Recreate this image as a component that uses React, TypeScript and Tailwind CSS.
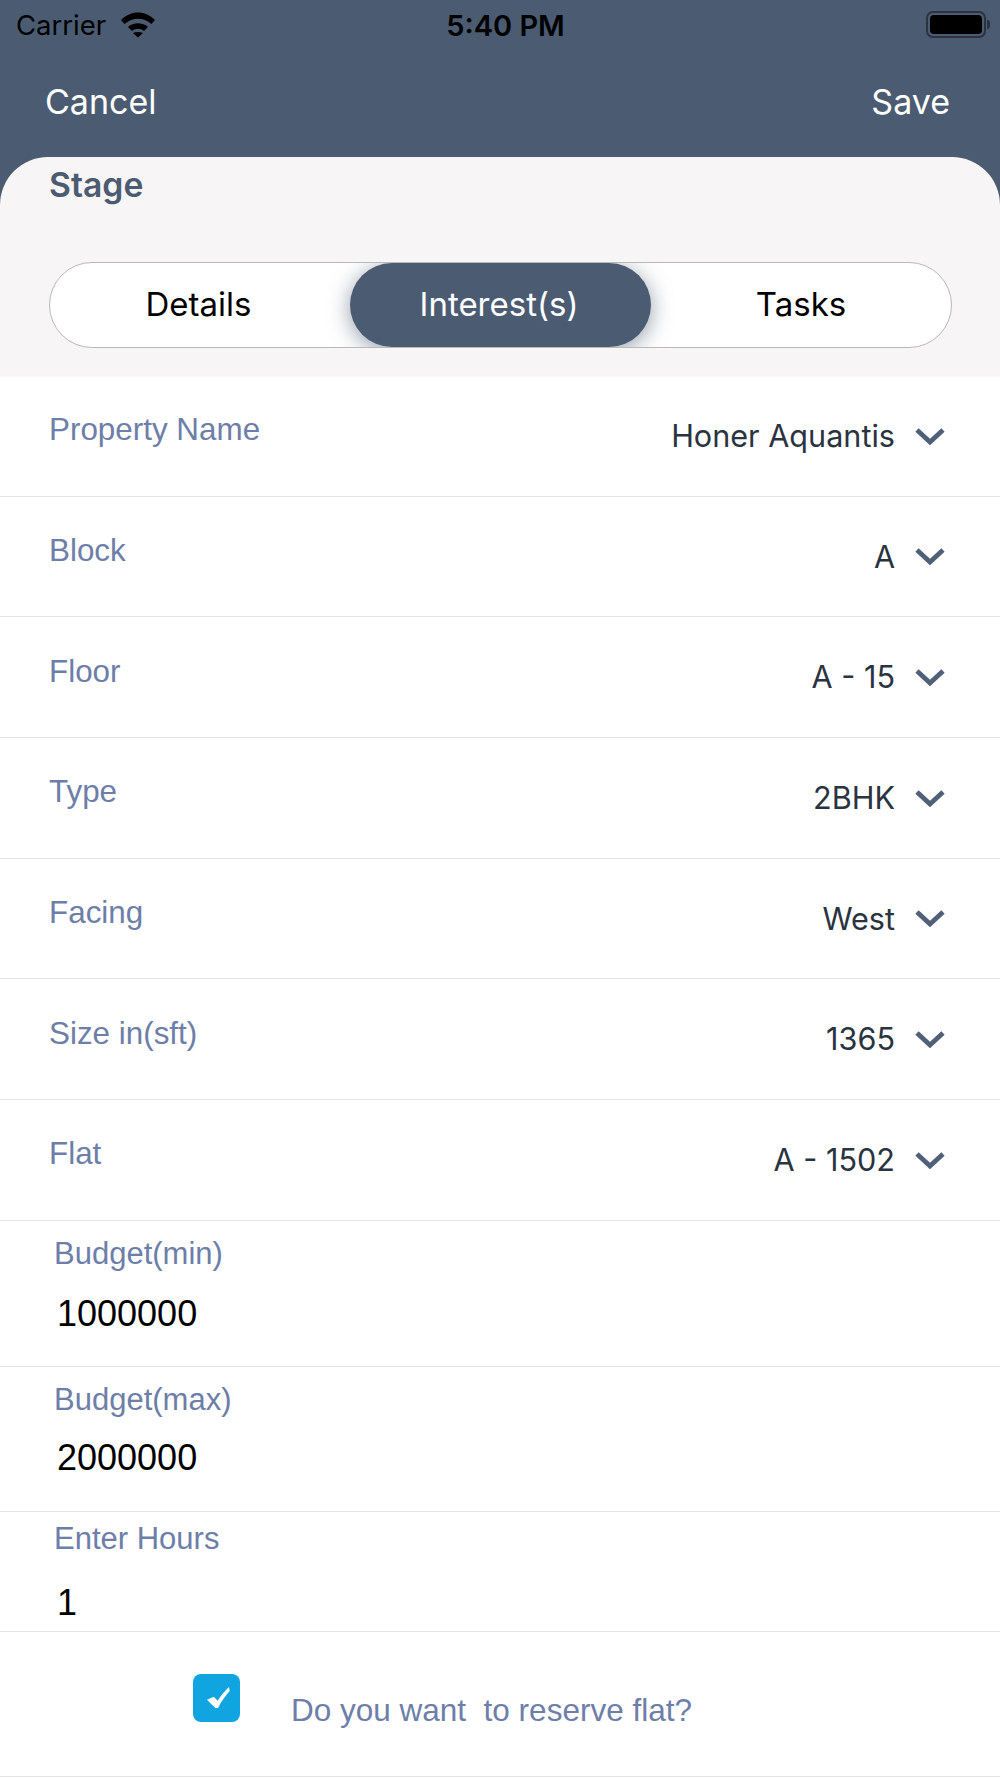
const sf = "font-['Inter',sans-serif]"
const arial = "font-['Liberation_Sans',Arial,sans-serif]"

const pickers = [
  { label: 'Property Name', value: 'Honer Aquantis' },
  { label: 'Block', value: 'A' },
  { label: 'Floor', value: 'A - 15' },
  { label: 'Type', value: '2BHK' },
  { label: 'Facing', value: 'West' },
  { label: 'Size in(sft)', value: '1365' },
  { label: 'Flat', value: 'A - 1502' },
]

function Chevron() {
  return (
    <svg width="32" height="18" viewBox="0 0 32 18" className="ml-[19px] mr-[54px] shrink-0">
      <path d="M3 3 L16 15 L29 3" fill="none" stroke="#4f6078" strokeWidth="4.8" />
    </svg>
  )
}

function PickerRow({ label, value }: { label: string; value: string }) {
  return (
    <div className="h-[120.67px] border-b-[1.5px] border-[#e3e3e3] flex items-center justify-between">
      <span className={`${arial} ml-[49px] mb-[12px] text-[31.4px] text-[#6d7ea8]`}>{label}</span>
      <div className="flex items-center">
        <span className={`${sf} text-[30.6px] text-[#2a3340]`}>{value}</span>
        <Chevron />
      </div>
    </div>
  )
}

function InputRow({ label, value, height, gap }: { label: string; value: string; height: string; gap: string }) {
  return (
    <div className={`${height} border-b-[1.5px] border-[#e3e3e3] pl-[54px] ${arial}`}>
      <div className="text-[31px] leading-[34px] text-[#6d7ea8]">{label}</div>
      <div className={`${gap} ml-[3px] text-[36px] leading-[40px] text-black`}>{value}</div>
    </div>
  )
}

export default function App() {
  return (
    <div className="w-[1000px] h-[1778px] bg-white overflow-hidden">
      <div className="bg-[#4b5c72] -mb-px">
        <div className="h-[157px] px-[16px]">
          <div className="h-[52px] flex items-center justify-between text-black">
            <div className="flex items-center w-[200px]">
              <span className={`${sf} text-[27.5px]`}>Carrier</span>
              <svg width="34" height="26" viewBox="0 0 34 26" className="ml-[15px] -mt-[2px]">
                <path d="M0 8 C10 -2 24 -2 34 8 L30.5 12 C22 5 12 5 3.5 12 Z" fill="#000" />
                <path d="M7 15 C12.5 10 21.5 10 27 15 L23 19 C19.5 16 14.5 16 11 19 Z" fill="#000" />
                <path d="M12 21 C15 19.5 19 19.5 22 21 L17 25.5 Z" fill="#000" />
              </svg>
            </div>
            <span className={`${sf} ml-[5px] text-[29px] font-semibold`}>5:40 PM</span>
            <div className="w-[200px] flex justify-end items-center -mr-[6px] mb-[3px]">
              <div className="w-[60px] h-[27px] rounded-[7px] border-[2px] border-[#2b3340] p-[2px]">
                <div className="w-full h-full rounded-[4px] bg-black" />
              </div>
              <div className="w-[3px] h-[9px] ml-[1px] rounded-r-sm bg-[#2b3340]" />
            </div>
          </div>
          <div className={`${sf} flex justify-between items-center pl-[29px] pr-[34px] mt-[30px] text-[34px] leading-[40px] text-white`}>
            <span>Cancel</span>
            <span>Save</span>
          </div>
        </div>
        <div className="h-[220px] bg-[#f7f5f6] rounded-t-[48px] px-[49px]">
          <div className={`${sf} text-[33.7px] leading-[36px] font-semibold text-[#4b5c72] pt-[10px]`}>Stage</div>
          <div className="mt-[59px] h-[86px] w-[903px] rounded-[43px] border-[1.5px] border-[#b9b9b9] bg-white overflow-hidden flex items-stretch">
            <div className={`${sf} flex-1 flex items-center justify-center text-[33px] text-black`}>
              <span className="mr-[3px]">Details</span>
            </div>
            <div className={`${sf} w-[301px] shrink-0 flex items-center justify-center rounded-[42px] bg-[#4b5c72] text-[33px] text-white shadow-[0_4px_22px_rgba(75,92,114,0.6)]`}>
              <span className="mr-[3px]">Interest(s)</span>
            </div>
            <div className={`${sf} flex-1 flex items-center justify-center text-[33px] text-black`}>Tasks</div>
          </div>
        </div>
      </div>
      {pickers.map(p => (
        <PickerRow key={p.label} label={p.label} value={p.value} />
      ))}
      <InputRow label="Budget(min)" value="1000000" height="h-[146px] pt-[16px]" gap="mt-[23px]" />
      <InputRow label="Budget(max)" value="2000000" height="h-[145px] pt-[16px]" gap="mt-[21px]" />
      <InputRow label="Enter Hours" value="1" height="h-[120px] pt-[10px]" gap="mt-[27px]" />
      <div className="h-[145px] border-b-[1.5px] border-[#e3e3e3] flex pl-[193px]">
        <div className="mt-[42px] w-[47px] h-[48px] rounded-[8px] bg-[#10a5e0] flex items-center justify-center">
          <svg width="23" height="21" viewBox="0 0 23 21" className="ml-[3px]">
            <path d="M0 12.7 L6.7 9.7 L10.7 13.7 C14 8.5 18 3.5 22 0 L22.7 4 C18 9 14 15 11 21 L8.3 21 Z" fill="#fff" />
          </svg>
        </div>
        <span className={`${arial} ml-[51px] mt-[60px] h-[36px] text-[31.5px] leading-[36px] text-[#6d7ea8] whitespace-pre`}>Do you want  to reserve flat?</span>
      </div>
    </div>
  )
}
